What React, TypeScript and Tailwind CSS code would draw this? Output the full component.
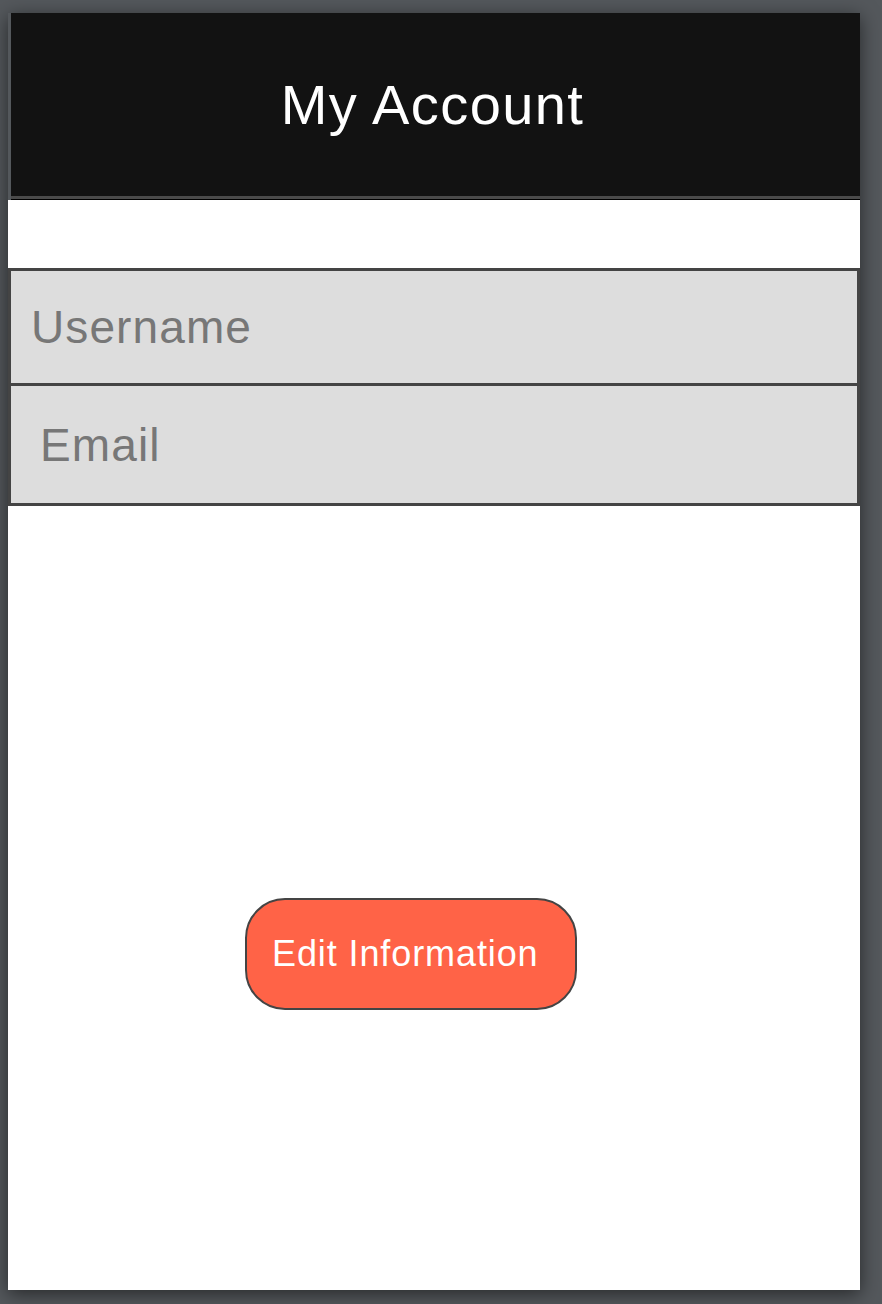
import React from 'react';

export default function App() {
  return (
    <div
      className="min-h-[1304px] w-full bg-[#54585c] pt-[13px] pl-[8px]"
      style={{ fontFamily: '"Liberation Sans", Arial, sans-serif' }}
    >
      <div className="flex w-[852px] flex-col shadow-[0_4px_18px_rgba(0,0,0,0.55)]">
        {/* Barra superior */}
        <div className="ml-[3px] flex h-[187px] flex-col bg-[#121212]">
          <div className="flex h-[183px] items-center justify-center pr-[6px]">
            <h1 className="text-[56px] leading-none tracking-[1.4px] text-white">My Account</h1>
          </div>
          <div className="h-[3px] bg-[#4a4a4a]" />
          <div className="h-[1px] bg-black" />
        </div>

        {/* Cuerpo */}
        <div className="flex h-[1090px] flex-col bg-white">
          <div className="mt-[68px] border-[3px] border-[#444444] bg-[#dddddd]">
            <div className="flex h-[115px] items-center border-b-[3px] border-[#444444] pl-[20px]">
              <span className="text-[46px] leading-none tracking-[1.1px] text-[#777777]">Username</span>
            </div>
            <div className="flex h-[117px] items-center pl-[29px]">
              <span className="text-[46px] leading-none tracking-[1.1px] text-[#777777]">Email</span>
            </div>
          </div>

          <div className="mt-[392px] ml-[237px]">
            <button
              type="button"
              className="flex h-[112px] w-[332px] items-center rounded-[40px] border-2 border-[#444444] bg-[#ff6347] pl-[25px] text-[36px] leading-none tracking-[0.9px] text-white"
            >
              Edit Information
            </button>
          </div>
        </div>
      </div>
    </div>
  );
}
